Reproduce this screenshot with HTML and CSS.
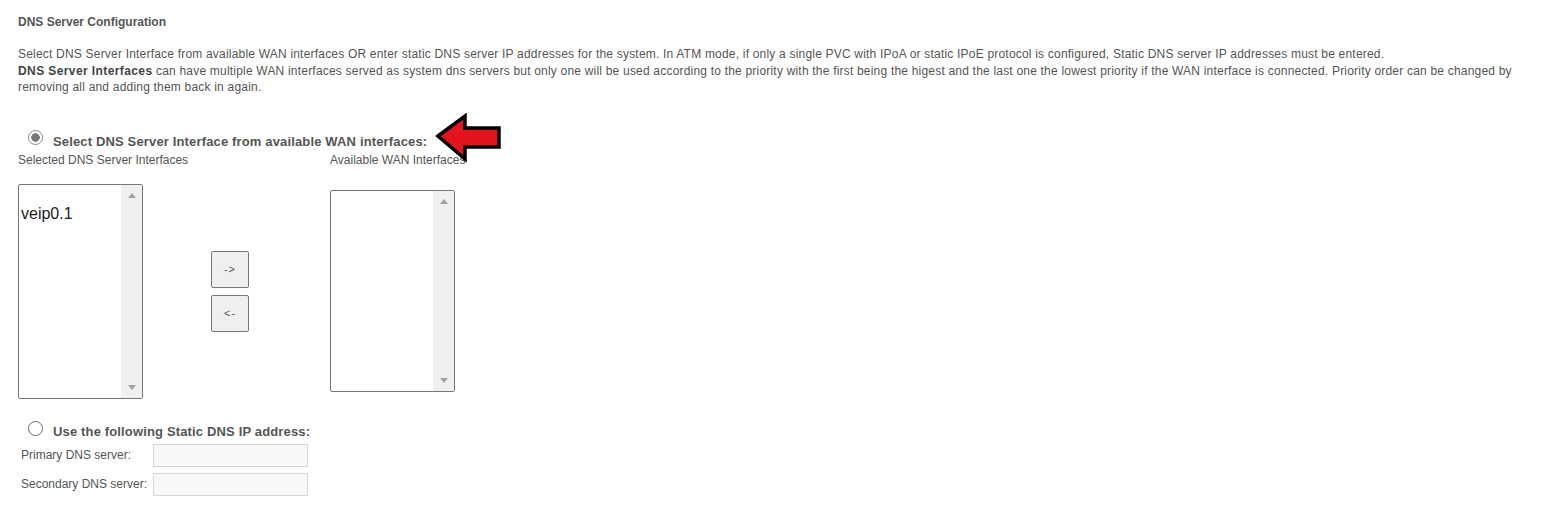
FILE: index.html
```html
<!DOCTYPE html>
<html lang="en">
<head>
    <meta charset="UTF-8">
    <title>DNS Server Configuration</title>
    <link rel="stylesheet" href="styles.css">
</head>
<body>

<div class="page">
    <h1 class="title">DNS Server Configuration</h1>

    <p class="intro">
        Select DNS Server Interface from available WAN interfaces OR enter static DNS server IP addresses for the system. In ATM mode, if only a single PVC with IPoA or static IPoE protocol is configured, Static DNS server IP addresses must be entered.<br>
        <b>DNS Server Interfaces</b> can have multiple WAN interfaces served as system dns servers but only one will be used according to the priority with the first being the higest and the last one the lowest priority if the WAN interface is connected. Priority order can be changed by removing all and adding them back in again.
    </p>

    <div class="option option-wan">
        <span class="radio checked"></span>
        <span class="option-label">Select DNS Server Interface from available WAN interfaces:</span>
        <!-- red pointer drawn over the page -->
        <svg class="pointer" width="68" height="50" viewBox="0 0 68 50">
            <polygon points="3,23 30,3 30,15 64,15 64,34 30,34 30,46" fill="#e3141d" stroke="#000" stroke-width="3.5" stroke-linejoin="miter"/>
        </svg>
    </div>

    <div class="iface-labels">
        <span class="iface-label">Selected DNS Server Interfaces</span>
        <span class="iface-label">Available WAN Interfaces</span>
    </div>

    <div class="iface-row">
        <div class="listbox listbox-selected">
            <div class="listbox-items">
                <div class="listbox-item">veip0.1</div>
            </div>
            <div class="scrollbar">
                <span class="arrow-up"></span>
                <span class="arrow-down"></span>
            </div>
        </div>

        <div class="mover">
            <button class="move-btn">-&gt;</button>
            <button class="move-btn">&lt;-</button>
        </div>

        <div class="listbox listbox-available">
            <div class="listbox-items"></div>
            <div class="scrollbar">
                <span class="arrow-up"></span>
                <span class="arrow-down"></span>
            </div>
        </div>
    </div>

    <div class="option option-static">
        <span class="radio"></span>
        <span class="option-label">Use the following Static DNS IP address:</span>
    </div>

    <table class="static-dns">
        <tr>
            <td>Primary DNS server:</td>
            <td><input type="text" class="dns-input"></td>
        </tr>
        <tr>
            <td>Secondary DNS server:</td>
            <td><input type="text" class="dns-input"></td>
        </tr>
    </table>
</div>

</body>
</html>
```

FILE: styles.css
```css
body {
    margin: 0;
    background: #fff;
    font-family: "Liberation Sans", Arial, sans-serif;
    color: #555;
}

.page {
    padding: 14px 18px 0 18px;
}

.title {
    font-size: 12px;
    font-weight: bold;
    margin: 0;
    line-height: 16px;
    color: #555;
}

.intro {
    font-size: 12px;
    letter-spacing: 0.2px;
    line-height: 16.5px;
    margin: 16px 0 0 0;
    color: #555;
}

.intro b {
    color: #444;
    letter-spacing: 0.4px;
}

.option {
    position: relative;
    display: flex;
    align-items: center;
}

.option-wan {
    margin-top: 31px;
    height: 22px;
}

.option-label {
    font-size: 13px;
    font-weight: bold;
    letter-spacing: 0.15px;
    color: #555;
    margin-left: 10px;
    padding-top: 7px;
}

.radio {
    box-sizing: border-box;
    width: 15px;
    height: 15px;
    margin-left: 10px;
    border-radius: 50%;
    border: 1px solid #666;
    background: #fff;
    display: inline-block;
}

.radio.checked {
    border-color: #888;
    background: radial-gradient(circle, #777 0 4px, #fff 4.5px);
}

.pointer {
    position: absolute;
    left: 417px;
    top: -14px;
}

.iface-labels {
    display: flex;
    font-size: 12px;
    line-height: 14px;
    margin-top: 4px;
}

.iface-label:first-child {
    width: 312px;
}

.iface-row {
    display: flex;
    align-items: center;
    margin-top: 17px;
}

.listbox {
    box-sizing: border-box;
    width: 125px;
    border: 1px solid #777;
    border-radius: 2px;
    display: flex;
    background: #fff;
    overflow: hidden;
}

.listbox-selected {
    height: 215px;
}

.listbox-available {
    height: 202px;
}

.listbox-items {
    flex: 1;
    padding-top: 20px;
}

.listbox-item {
    font-size: 16px;
    color: #222;
    padding-left: 2px;
    line-height: 18px;
}

.scrollbar {
    width: 21px;
    background: #f0f0f0;
    display: flex;
    flex-direction: column;
    justify-content: space-between;
    align-items: center;
    padding: 8px 0 8px 0;
}

.arrow-up, .arrow-down {
    width: 0;
    height: 0;
    border-left: 4px solid transparent;
    border-right: 4px solid transparent;
}

.arrow-up {
    border-bottom: 5px solid #a3a3a3;
}

.arrow-down {
    border-top: 5px solid #a3a3a3;
}

.mover {
    width: 187px;
    padding-left: 68px;
    box-sizing: border-box;
    display: flex;
    flex-direction: column;
    gap: 7px;
}

.move-btn {
    width: 38px;
    height: 37px;
    padding: 0;
    background: #efefef;
    border: 1px solid #777;
    border-radius: 2px;
    font-family: "Liberation Sans", Arial, sans-serif;
    font-size: 11px;
    letter-spacing: 1px;
    color: #555;
}

.option-static {
    margin-top: 21px;
    height: 18px;
}

.option-static .option-label {
    padding-top: 6px;
}

.static-dns {
    border-collapse: collapse;
    margin-top: 6px;
    margin-left: 1px;
    font-size: 12px;
}

.static-dns td {
    padding: 0 0 6px 2px;
    height: 22px;
    white-space: nowrap;
}

.static-dns td:first-child {
    width: 130px;
    padding-right: 0;
}

.dns-input {
    box-sizing: border-box;
    width: 155px;
    height: 23px;
    border: 1px solid #d6d6d6;
    background: #f8f8f8;
    margin: 0;
    display: block;
}
```
